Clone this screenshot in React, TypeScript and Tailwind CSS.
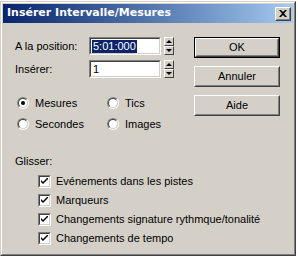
const sunkenOuter = "border border-t-[#808080] border-l-[#808080] border-b-white border-r-white";
const sunkenInner = "border border-t-[#404040] border-l-[#404040] border-b-[#d4d0c8] border-r-[#d4d0c8]";
const raisedOuter = "border border-t-white border-l-white border-b-[#404040] border-r-[#404040]";
const raisedInner = "border border-t-[#d4d0c8] border-l-[#d4d0c8] border-b-[#808080] border-r-[#808080]";

function Spinner() {
  return (
    <div className="ml-[3px] flex h-[18px] w-[10px] flex-col">
      {["up", "down"].map((dir) => (
        <div key={dir} className={`h-[9px] w-[10px] bg-[#d4d0c8] ${raisedOuter} flex items-center justify-center`}>
          {dir === "up" ? (
            <div className="h-0 w-0 border-x-[3px] border-b-[3px] border-x-transparent border-b-black" />
          ) : (
            <div className="h-0 w-0 border-x-[3px] border-t-[3px] border-x-transparent border-t-black" />
          )}
        </div>
      ))}
    </div>
  );
}

function TextField({ value, selected }: { value: string; selected?: boolean }) {
  return (
    <div className={`h-[18px] w-[72px] ${sunkenOuter}`}>
      <div className={`h-full w-full bg-white ${sunkenInner} flex items-center pl-[1px]`}>
        <span className={selected ? "bg-[#0a246a] px-[1px] leading-[13px] text-white" : "px-[1px] leading-[13px] text-black"}>
          {value}
        </span>
      </div>
    </div>
  );
}

function Radio({ label, checked }: { label: string; checked?: boolean }) {
  return (
    <div className="flex h-[16px] items-center">
      <div className="h-[12px] w-[12px] rounded-full border border-t-[#808080] border-l-[#808080] border-b-white border-r-white">
        <div className="flex h-full w-full items-center justify-center rounded-full border border-t-[#404040] border-l-[#404040] border-b-[#d4d0c8] border-r-[#d4d0c8] bg-white">
          {checked && <div className="h-[4px] w-[4px] rounded-full bg-black" />}
        </div>
      </div>
      <span className="ml-[6px]">{label}</span>
    </div>
  );
}

function Check({ label }: { label: string }) {
  return (
    <div className="flex h-[19px] items-center pl-[23px]">
      <div className={`h-[13px] w-[13px] ${sunkenOuter}`}>
        <div className={`h-full w-full bg-white ${sunkenInner} flex items-center justify-center`}>
          <svg width="7" height="7" viewBox="0 0 7 7">
            <path d="M0 2 L0 4 L2 6 L7 1 L7 -1 L2 4 Z" fill="black" />
          </svg>
        </div>
      </div>
      <span className="ml-[5px]">{label}</span>
    </div>
  );
}

function Button({ label, isDefault }: { label: string; isDefault?: boolean }) {
  return (
    <div className={`h-[21px] w-[86px] ${isDefault ? "border border-black" : ""}`}>
      <div className={`h-full w-full bg-[#d4d0c8] ${raisedOuter}`}>
        <div className={`h-full w-full ${raisedInner} flex items-center justify-center`}>{label}</div>
      </div>
    </div>
  );
}

export default function App() {
  return (
    <div className="h-[257px] w-[298px] bg-white pt-[1px] pr-[2px] pb-[1px] text-[11px] text-black [font-family:'Liberation_Sans',Arial,sans-serif]">
      <div className="h-full w-full border border-t-[#d4d0c8] border-l-[#d4d0c8] border-b-[#404040] border-r-[#404040]">
        <div className="h-full w-full border border-t-white border-l-white border-b-[#808080] border-r-[#808080] bg-[#d4d0c8] p-[1px]">
          <div className="flex h-[19px] items-center justify-between bg-gradient-to-r from-[#0a246a] to-[#a6caf0] pl-[4px] pr-[2px]">
            <span className="text-[11px] font-bold text-white [font-family:'DejaVu_Sans','Verdana',sans-serif]">
              Insérer Intervalle/Mesures
            </span>
            <div className={`h-[14px] w-[16px] bg-[#d4d0c8] ${raisedOuter}`}>
              <div className={`h-full w-full ${raisedInner} flex items-center justify-center`}>
                <svg width="8" height="7" viewBox="0 0 8 7">
                  <path d="M0 0h2l2 2 2-2h2L5 3.5 8 7H6L4 5 2 7H0l3-3.5z" fill="black" />
                </svg>
              </div>
            </div>
          </div>

          <div className="flex pt-[14px]">
            <div className="w-[190px] pl-[12px]">
              <div className="flex items-center">
                <span className="w-[74px]">A la position:</span>
                <TextField value="5:01:000" selected />
                <Spinner />
              </div>
              <div className="mt-[5px] flex items-center">
                <span className="w-[74px]">Insérer:</span>
                <TextField value="1" />
                <Spinner />
              </div>
              <div className="mt-[17px] grid grid-cols-[90px_1fr] gap-y-[5px] pl-[2px]">
                <Radio label="Mesures" checked />
                <Radio label="Tics" />
                <Radio label="Secondes" />
                <Radio label="Images" />
              </div>
            </div>
            <div className="ml-[1px] flex flex-col gap-[8px]">
              <Button label="OK" isDefault />
              <Button label="Annuler" />
              <Button label="Aide" />
            </div>
          </div>

          <div className="mt-[21px] pl-[12px]">
            <div className="mb-[2px]">Glisser:</div>
            <Check label="Evénements dans les pistes" />
            <Check label="Marqueurs" />
            <Check label="Changements signature rythmque/tonalité" />
            <Check label="Changements de tempo" />
          </div>
        </div>
      </div>
    </div>
  );
}
